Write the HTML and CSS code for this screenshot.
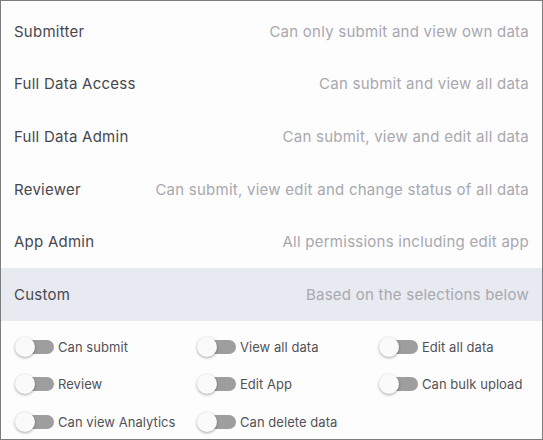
FILE: index.html
```html
<!DOCTYPE html>
<html>
<head>
<meta charset="utf-8">
<link rel="stylesheet" href="styles.css">
</head>
<body>
<div class="panel">
  <div class="roles">
    <div class="role"><span class="name">Submitter</span><span class="desc">Can only submit and view own data</span></div>
    <div class="role"><span class="name">Full Data Access</span><span class="desc">Can submit and view all data</span></div>
    <div class="role"><span class="name">Full Data Admin</span><span class="desc">Can submit, view and edit all data</span></div>
    <div class="role"><span class="name">Reviewer</span><span class="desc">Can submit, view edit and change status of all data</span></div>
    <div class="role"><span class="name">App Admin</span><span class="desc">All permissions including edit app</span></div>
    <div class="role selected"><span class="name">Custom</span><span class="desc">Based on the selections below</span></div>
  </div>
  <div class="perms">
    <label class="perm"><span class="switch"><span class="track"></span><span class="thumb"></span></span>Can submit</label>
    <label class="perm"><span class="switch"><span class="track"></span><span class="thumb"></span></span>View all data</label>
    <label class="perm"><span class="switch"><span class="track"></span><span class="thumb"></span></span>Edit all data</label>
    <label class="perm"><span class="switch"><span class="track"></span><span class="thumb"></span></span>Review</label>
    <label class="perm"><span class="switch"><span class="track"></span><span class="thumb"></span></span>Edit App</label>
    <label class="perm"><span class="switch"><span class="track"></span><span class="thumb"></span></span>Can bulk upload</label>
    <label class="perm"><span class="switch"><span class="track"></span><span class="thumb"></span></span>Can view Analytics</label>
    <label class="perm"><span class="switch"><span class="track"></span><span class="thumb"></span></span>Can delete data</label>
  </div>
</div>
</body>
</html>
```
FILE: styles.css
```css
html, body {
  margin: 0;
  padding: 0;
  background: #ffffff;
}
body {
  font-family: Inter, "Noto Sans", sans-serif;
}
.panel {
  box-sizing: border-box;
  width: 543px;
  height: 440px;
  border: 1px solid #7d7d7d;
  background: #fdfdfe;
  overflow: hidden;
  padding-top: 4px;
}
.roles {
  display: flex;
  flex-direction: column;
}
.role {
  height: 52.6px;
  display: flex;
  align-items: center;
  justify-content: space-between;
  padding: 0 13px;
  font-size: 15px;
  letter-spacing: 0.25px;
}
.role.selected {
  background: #e8eaf1;
}
.name {
  color: #48484c;
}
.desc {
  color: #a8a8ae;
}
.perms {
  display: grid;
  grid-template-columns: 182px 182px 1fr;
  grid-auto-rows: 37.5px;
  padding: 7.5px 0 0 13px;
}
.perm {
  display: flex;
  align-items: center;
  font-size: 13px;
  color: #525256;
  letter-spacing: 0.05px;
}
.switch {
  position: relative;
  width: 42px;
  height: 22px;
  margin-right: 2px;
  flex: none;
}
.track {
  position: absolute;
  left: 6px;
  top: 4px;
  width: 34px;
  height: 14px;
  border-radius: 7px;
  background: #9e9e9e;
}
.thumb {
  position: absolute;
  left: 1px;
  top: 1px;
  width: 20px;
  height: 20px;
  border-radius: 50%;
  background: #fafafa;
  box-shadow: 0 1px 3px rgba(0,0,0,0.35);
}
```
